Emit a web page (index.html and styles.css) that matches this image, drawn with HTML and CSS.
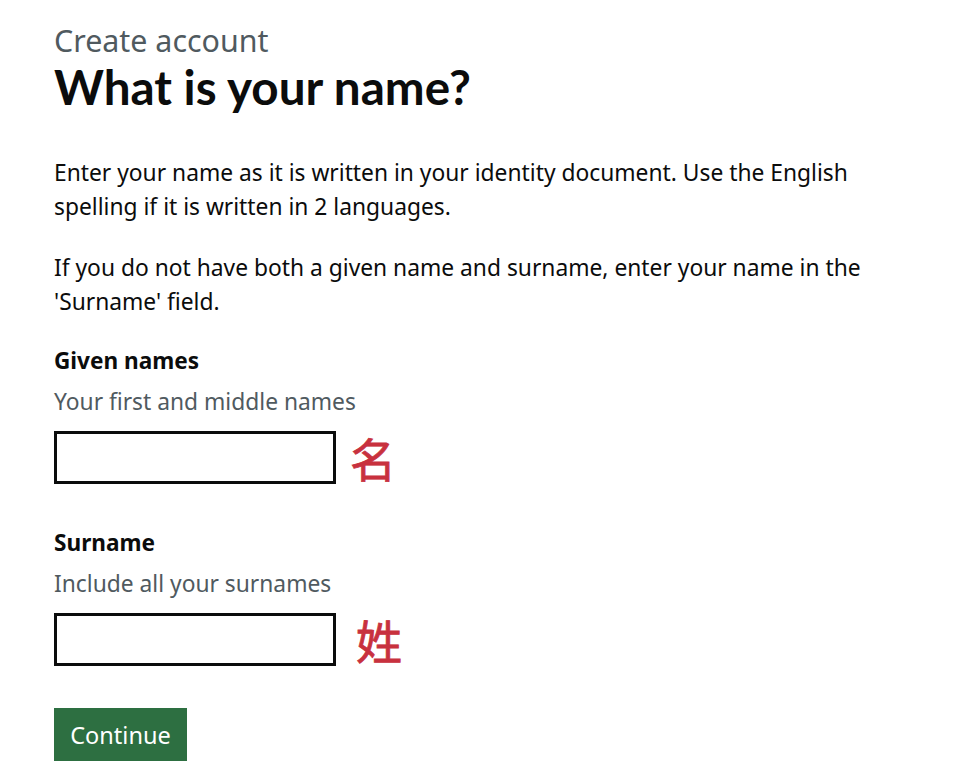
FILE: index.html
```html
<!DOCTYPE html>
<html lang="en">
<head>
<meta charset="utf-8">
<title>What is your name?</title>
<link rel="stylesheet" href="styles.css">
</head>
<body>
<main class="page">
  <span class="caption">Create account</span>
  <h1 class="heading">What is your name?</h1>
  <p class="body">Enter your name as it is written in your identity document. Use the English spelling if it is written in 2 languages.</p>
  <p class="body">If you do not have both a given name and surname, enter your name in the 'Surname' field.</p>

  <div class="field">
    <label class="label" for="given">Given names</label>
    <div class="hint">Your first and middle names</div>
    <div class="input-row">
      <input class="input" id="given" type="text">
      <span class="cjk cjk-given">名</span>
    </div>
  </div>

  <div class="field">
    <label class="label" for="surname">Surname</label>
    <div class="hint">Include all your surnames</div>
    <div class="input-row">
      <input class="input" id="surname" type="text">
      <span class="cjk cjk-surname">姓</span>
    </div>
  </div>

  <button class="button" type="button">Continue</button>
</main>
</body>
</html>
```

FILE: styles.css
```css
html, body {
  margin: 0;
  padding: 0;
  background: #ffffff;
}

body {
  font-family: "Noto Sans", "Liberation Sans", Arial, sans-serif;
  color: #0b0c0c;
}

.page {
  padding: 25px 0 0 54px;
  width: 840px;
}

.caption {
  display: block;
  font-size: 30.4px;
  line-height: 32px;
  color: #505a5f;
}

.heading {
  margin: 1px 0 0;
  font-family: Lato, "Noto Sans", sans-serif;
  font-size: 47.6px;
  line-height: 58px;
  font-weight: 700;
}

.body {
  margin: 40px 0 0;
  font-size: 22.8px;
  line-height: 34px;
}

.body + .body {
  margin-top: 27px;
}

.field {
  margin-top: 25px;
}

.field + .field {
  margin-top: 42px;
}

.label {
  display: block;
  font-size: 22.6px;
  line-height: 34px;
  font-weight: 700;
}

.hint {
  margin-top: 7px;
  font-size: 22.8px;
  line-height: 34px;
  color: #505a5f;
}

.input-row {
  margin-top: 12px;
  display: flex;
  align-items: center;
}

.input {
  box-sizing: border-box;
  width: 282px;
  height: 53px;
  margin: 0;
  border: 3px solid #0b0c0c;
  border-radius: 0;
  background: #fff;
  font: inherit;
}

.cjk {
  font-family: "Noto Sans CJK SC", sans-serif;
  font-size: 46px;
  font-weight: 400;
  -webkit-text-stroke: 0.8px #c8313e;
  line-height: 53px;
  color: #c8313e;
}

.cjk-given {
  margin-left: 14px;
}

.cjk-surname {
  margin-left: 20px;
}

.button {
  display: block;
  margin-top: 42px;
  box-sizing: border-box;
  width: 133px;
  height: 53px;
  padding: 0;
  border: 0;
  border-radius: 0;
  background: #2d6f41;
  box-shadow: 0 3px 0 #17391f;
  color: #ffffff;
  font-family: "Noto Sans", "Liberation Sans", Arial, sans-serif;
  font-size: 23.5px;
  line-height: 48px;
}
```
